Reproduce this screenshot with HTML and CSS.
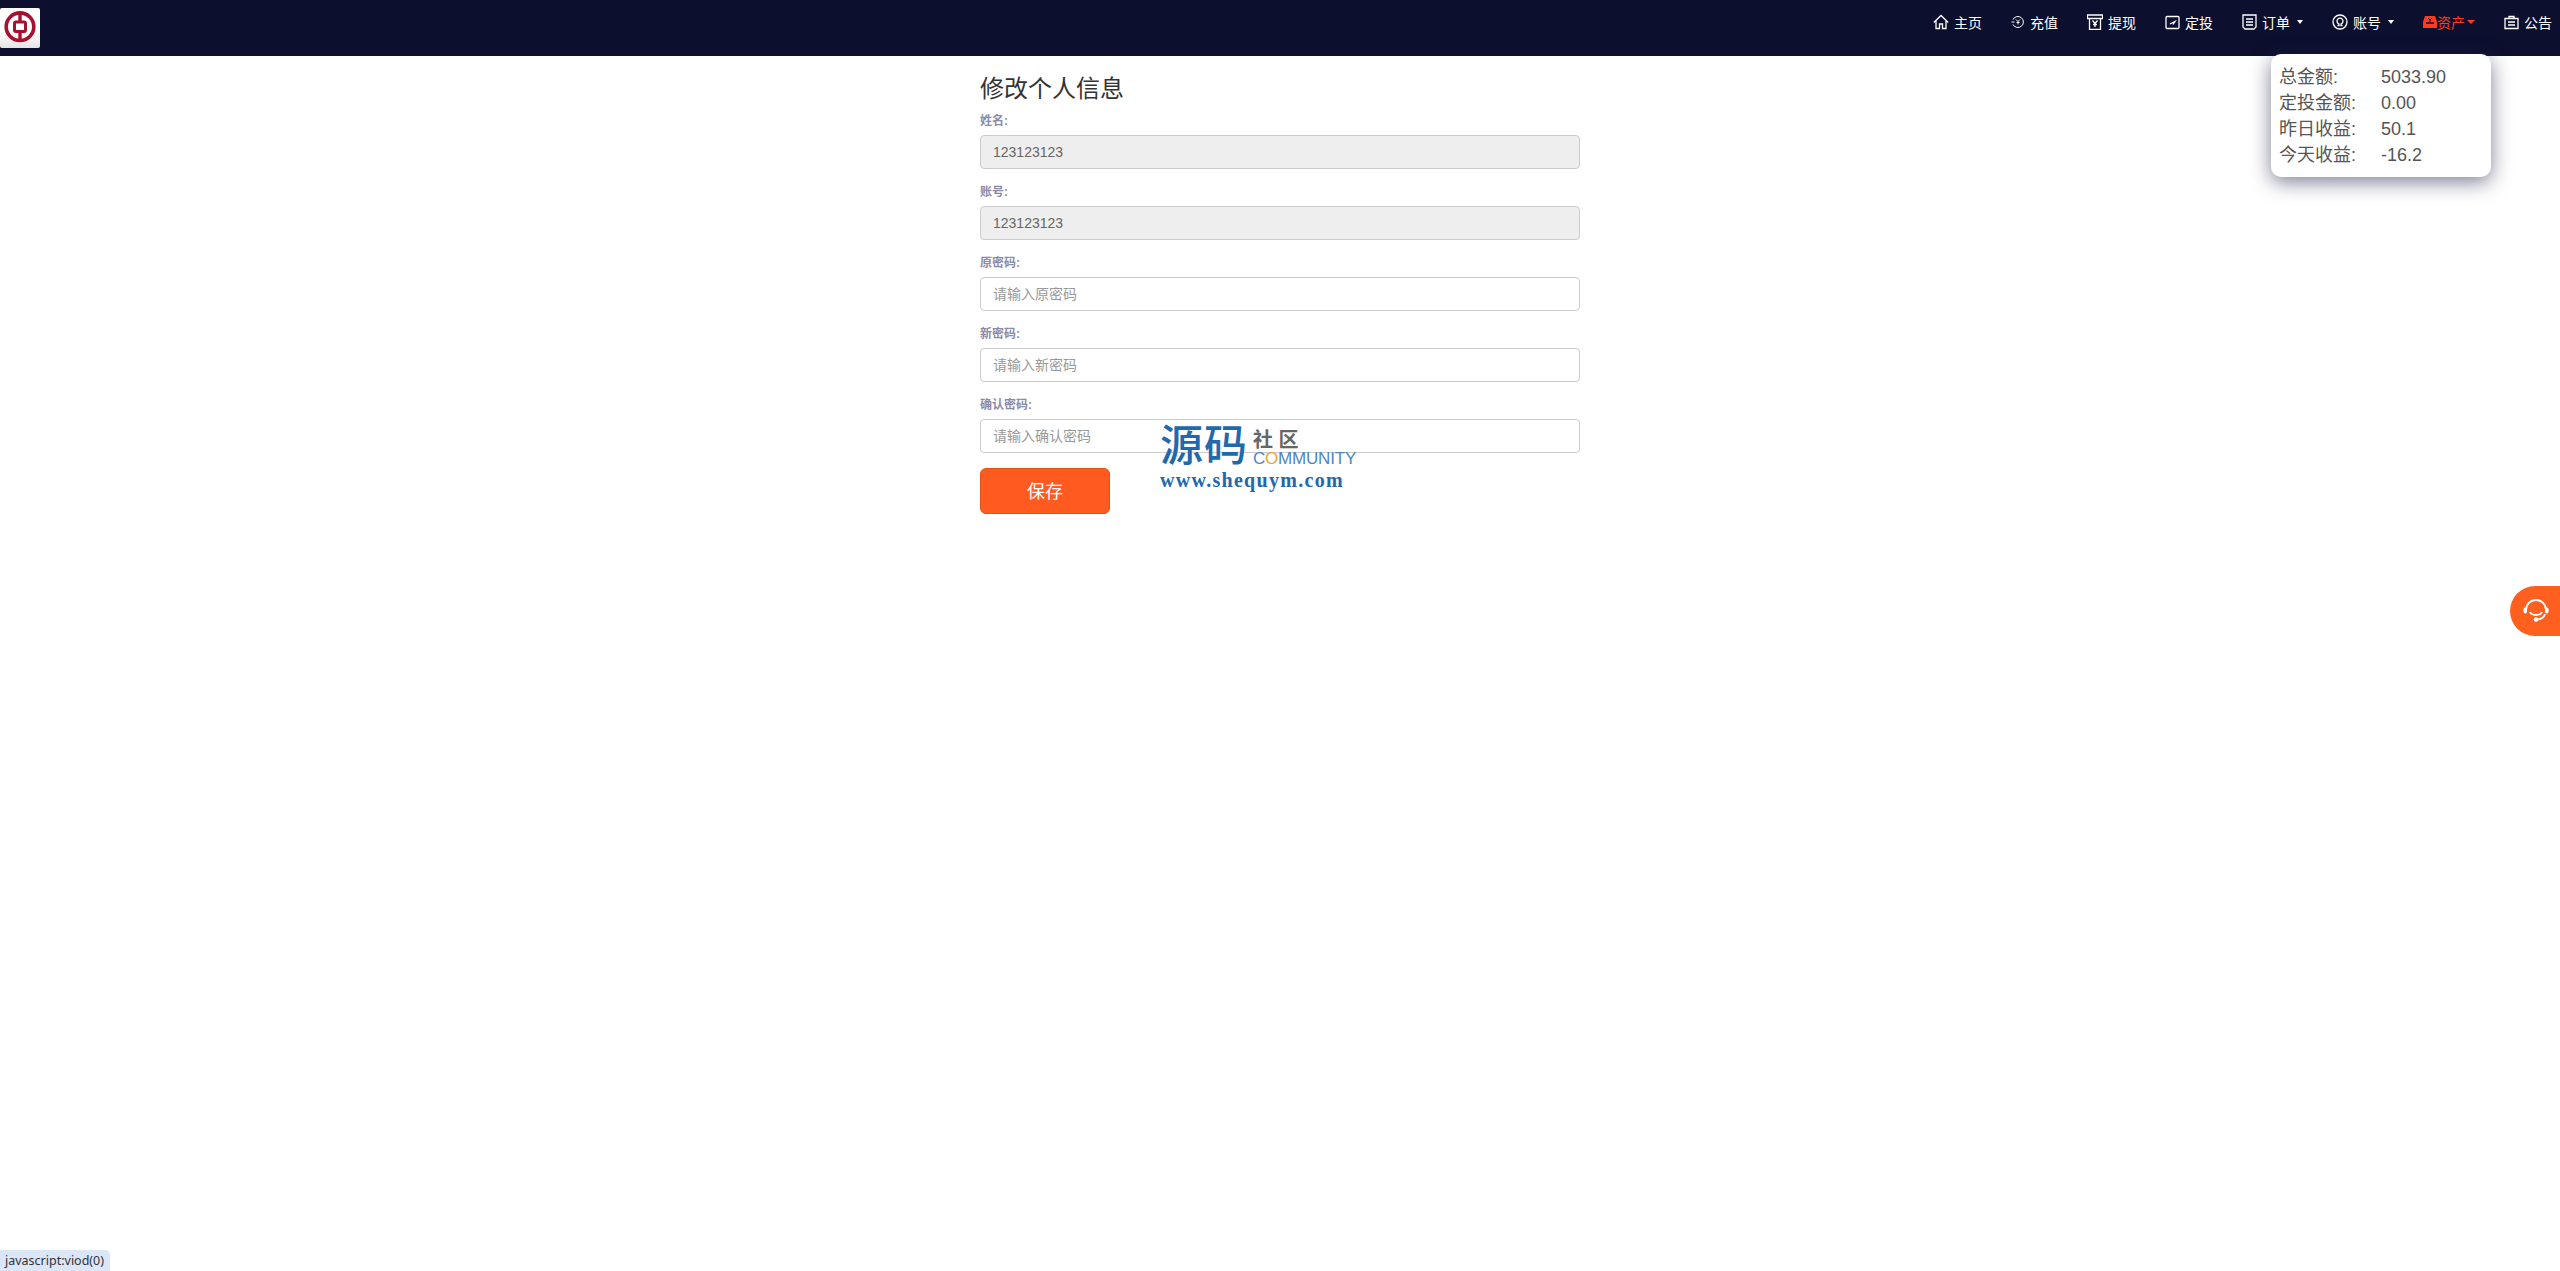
FILE: index.html
```html
<!DOCTYPE html>
<html lang="zh-CN">
<head>
    <meta charset="UTF-8">
    <title>修改个人信息</title>
    <link rel="stylesheet" href="styles.css">
</head>
<body>
    <nav class="navbar">
        <a class="brand" href="#">
            <svg viewBox="0 0 40 40" width="40" height="40">
                <circle cx="20" cy="18.700" r="13.800" fill="none" stroke="#a8102f" stroke-width="3.600"/>
                <rect x="14.500" y="14" width="11" height="9.400" rx="1.500" fill="none" stroke="#a8102f" stroke-width="3"/>
                <path d="M20 5v9M20 23.400v9" stroke="#a8102f" stroke-width="3.400"/>
            </svg>
        </a>
        <ul class="nav-list">
            <li class="nav-item">
                <svg class="icon" viewBox="0 0 16 16" width="16" height="16"><path d="M0.800 8.500L8 1.500l7.200 7M3 7v7.500h3.500V10h3v4.500H13V7"/></svg>
                主页
            </li>
            <li class="nav-item">
                <svg class="icon icon-small" viewBox="0 0 14 14" width="14" height="14"><path d="M2 4.500A5.500 5.500 0 1 1 2 9.500M0.500 7h3"/><path d="M5 4.500l2 2 2-2M7 6.500v3M5.500 7.500h3"/></svg>
                充值
            </li>
            <li class="nav-item">
                <svg class="icon" viewBox="0 0 16 16" width="16" height="16"><path d="M0.500 1h15v3.500h-15zM2.500 4.500v11h11v-11M5.500 6.500l2.500 3 2.500-3M8 9.500v3.500M6 10.500h4"/></svg>
                提现
            </li>
            <li class="nav-item">
                <svg class="icon" viewBox="0 0 15 15" width="15" height="15"><rect x="1" y="1.500" width="13" height="12" rx="1"/><path d="M5 9l5-2.500-2 3"/></svg>
                定投
            </li>
            <li class="nav-item">
                <svg class="icon" viewBox="0 0 15 16" width="15" height="16"><path d="M1 1h13v12l-2 2H3l-2-2zM4 5h7M4 8h7M4 11h7"/></svg>
                订单 <span class="caret"></span>
            </li>
            <li class="nav-item">
                <svg class="icon" viewBox="0 0 16 16" width="16" height="16"><circle cx="8" cy="8" r="7"/><path d="M5.500 11.500h1.500v-1.500a3 3 0 1 1 2 0v1.500h1.500"/></svg>
                账号 <span class="caret"></span>
            </li>
            <li class="nav-item nav-active">
                <svg class="icon-solid" viewBox="0 0 14 14" width="14" height="14"><path d="M2 1h10l2 6v6H0V7z" fill="#ff3b1f"/><path d="M3 8h8" stroke="#0c0f2e" stroke-width="1.500"/><path d="M5 3l2 2 2-2M7 5v2" stroke="#0c0f2e" stroke-width="1" fill="none"/></svg>
                资产<span class="caret"></span>
            </li>
            <li class="nav-item">
                <svg class="icon" viewBox="0 0 15 15" width="15" height="15"><path d="M1 3.500h13v10H1zM5 3.500V1.500h5v2M4 7h7M4 10h7"/></svg>
                公告
            </li>
        </ul>
    </nav>

    <div class="assets-popup">
        <div class="assets-row"><span class="assets-name">总金额:</span><span>5033.90</span></div>
        <div class="assets-row"><span class="assets-name">定投金额:</span><span>0.00</span></div>
        <div class="assets-row"><span class="assets-name">昨日收益:</span><span>50.1</span></div>
        <div class="assets-row"><span class="assets-name">今天收益:</span><span>-16.2</span></div>
    </div>

    <main class="content">
        <h3 class="page-title">修改个人信息</h3>
        <form>
            <div class="form-group">
                <label>姓名:</label>
                <input type="text" value="123123123" disabled>
            </div>
            <div class="form-group">
                <label>账号:</label>
                <input type="text" value="123123123" disabled>
            </div>
            <div class="form-group">
                <label>原密码:</label>
                <input type="password" placeholder="请输入原密码">
            </div>
            <div class="form-group">
                <label>新密码:</label>
                <input type="password" placeholder="请输入新密码">
            </div>
            <div class="form-group">
                <label>确认密码:</label>
                <input type="password" placeholder="请输入确认密码">
            </div>
            <button type="button" class="btn-save">保存</button>
        </form>
    </main>

    <div class="watermark">
        <div class="wm-top">
            <span class="wm-big">源码</span>
            <div class="wm-side">
                <span class="wm-cn">社 区</span>
                <span class="wm-en">C<b>O</b>MMUNITY</span>
            </div>
        </div>
        <div class="wm-url">www.shequym.com</div>
    </div>

    <a class="service-tab" href="#">
        <svg viewBox="0 0 30 30" width="30" height="30">
            <path d="M5 15a10 10 0 0 1 20 0M9 17c1.500 4 10.500 4 12 0M24 19c-1 3-3 5-7 5.500" fill="none" stroke="#fff" stroke-width="1.800"/>
            <rect x="2.500" y="12.500" width="3.500" height="6" rx="1.700" fill="#fff"/>
            <rect x="24" y="12.500" width="3.500" height="6" rx="1.700" fill="#fff"/>
            <circle cx="15" cy="24.500" r="2.300" fill="#fff"/>
        </svg>
    </a>

    <div class="status-tip">javascript:viod(0)</div>
</body>
</html>
```

FILE: styles.css
```css
* {
    box-sizing: border-box;
}
body, html {
    margin: 0;
    padding: 0;
    height: 100%;
    background-color: #fff;
    color: #333;
    font-family: "Liberation Sans", "Noto Sans CJK SC", sans-serif;
    font-size: 14px;
}
.navbar {
    height: 56px;
    background-color: #0c0f2e;
    display: flex;
    justify-content: space-between;
    align-items: flex-start;
}
.brand {
    display: block;
    width: 40px;
    height: 40px;
    margin-top: 8px;
    background: linear-gradient(#fff 60%, #e4e4e4);
    border-radius: 2px;
}
.brand svg {
    display: block;
}
.nav-list {
    list-style: none;
    margin: 0;
    padding: 0 8px 0 0;
    height: 44px;
    display: flex;
    align-items: center;
    gap: 29px;
}
.nav-item {
    display: flex;
    align-items: center;
    gap: 5px;
    color: #fff;
    font-size: 14px;
}
.nav-active {
    color: #ff3b1f;
    gap: 0;
}
.icon {
    fill: none;
    stroke: #fff;
    stroke-width: 1.3;
}
.icon-small {
    stroke-width: 1;
}
.caret {
    width: 0;
    height: 0;
    margin-left: 2px;
    border-top: 4px solid currentColor;
    border-left: 3.5px solid transparent;
    border-right: 3.5px solid transparent;
}
.nav-active .caret {
    margin-left: 2px;
    border-left-width: 4px;
    border-right-width: 4px;
}
.assets-popup {
    position: absolute;
    left: 2271px;
    top: 54px;
    width: 220px;
    height: 123px;
    padding: 10px 8px;
    background-color: #fff;
    border-radius: 10px;
    box-shadow: 0 5px 20px rgba(40, 40, 80, 0.6);
    font-size: 18px;
    line-height: 26px;
    color: #555;
}
.assets-row {
    display: flex;
}
.assets-name {
    width: 102px;
}
.content {
    width: 600px;
    margin: 0 auto;
    padding-top: 19px;
}
.page-title {
    margin: 0 0 11px;
    font-size: 24px;
    font-weight: 400;
    line-height: 27px;
    color: #333;
}
.form-group {
    margin-bottom: 15px;
}
.form-group label {
    display: block;
    height: 22px;
    margin-bottom: 0;
    font-size: 12px;
    line-height: 17px;
    font-weight: 700;
    color: #8a8aa8;
}
.form-group input {
    display: block;
    width: 100%;
    height: 34px;
    padding: 6px 12px;
    font-family: inherit;
    font-size: 14px;
    color: #555;
    background-color: #fff;
    border: 1px solid #ccc;
    border-radius: 4px;
}
.form-group input::placeholder {
    color: #999;
}
.form-group input:disabled {
    background-color: #eee;
    color: #666;
}
.btn-save {
    display: block;
    width: 130px;
    height: 46px;
    padding: 0 0 3px;
    background-color: #ff5a1f;
    color: #fff;
    font-family: inherit;
    font-size: 18px;
    border: 1px solid #e8500f;
    border-radius: 6px;
}
.watermark {
    position: absolute;
    left: 1160px;
    top: 420px;
    width: 200px;
    color: #2268ad;
}
.wm-top {
    display: flex;
    align-items: center;
    gap: 5px;
    height: 50px;
}
.wm-big {
    font-size: 43px;
    font-weight: 500;
    line-height: 50px;
    letter-spacing: 1px;
    margin-top: 2px;
}
.wm-side {
    display: flex;
    flex-direction: column;
    margin-top: 6px;
}
.wm-cn {
    font-size: 20px;
    line-height: 22px;
    font-weight: 700;
    color: #666;
}
.wm-en {
    font-size: 17px;
    line-height: 16px;
    letter-spacing: -0.2px;
    color: #4f86c0;
}
.wm-en b {
    font-weight: 400;
    color: #e9a43c;
}
.wm-url {
    font-family: "Liberation Serif", serif;
    font-weight: 700;
    font-size: 20px;
    line-height: 20px;
    letter-spacing: 1.300px;
}
.service-tab {
    position: fixed;
    right: 0;
    top: 586px;
    width: 50px;
    height: 50px;
    padding: 9px 0 0 11px;
    background-color: #ff5f1f;
    border-radius: 25px 0 0 25px;
}
.service-tab svg {
    display: block;
}
.status-tip {
    position: fixed;
    left: 0;
    bottom: 0;
    height: 21px;
    padding: 0 6px 0 5px;
    font-family: "Noto Sans", sans-serif;
    font-size: 12.500px;
    line-height: 21px;
    color: #333;
    background-color: #dbe6f9;
    border-top-right-radius: 5px;
}
```
